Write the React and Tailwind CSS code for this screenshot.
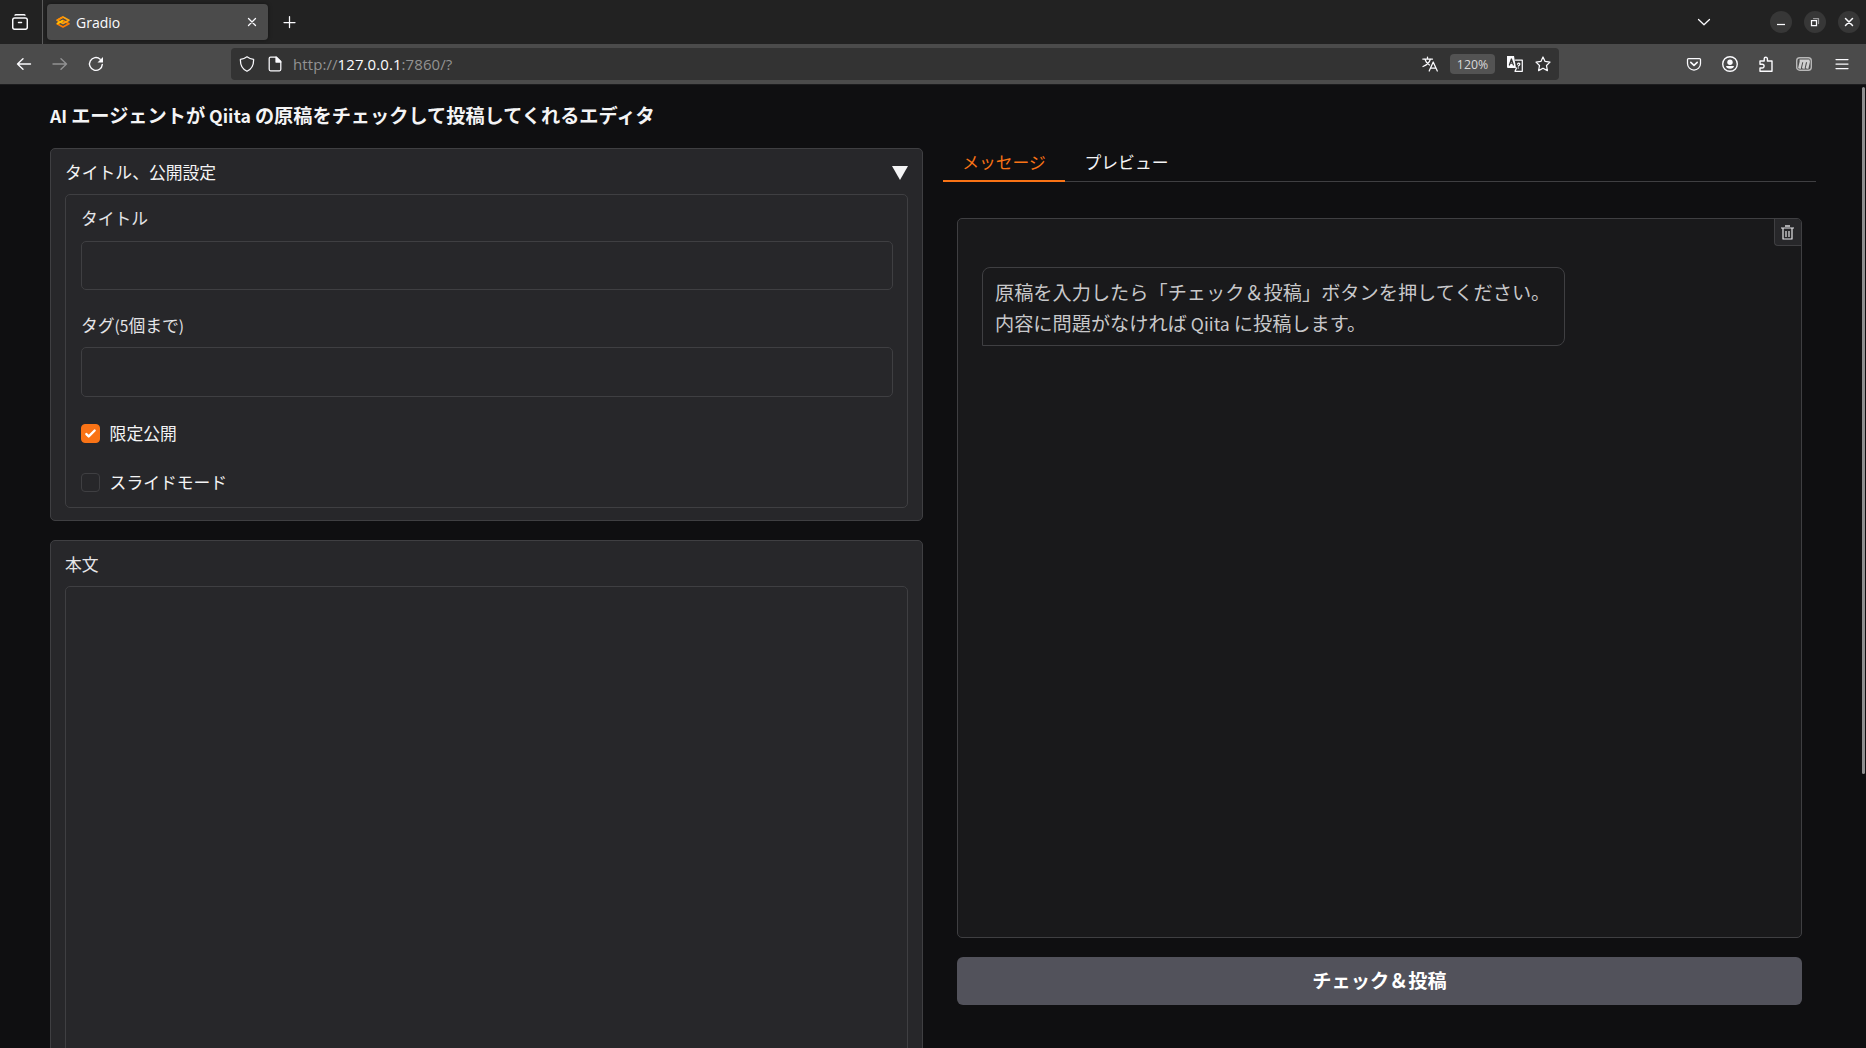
import React from 'react'

const ZOOM = '120%'

function Icon({ children, className = 'size-4', viewBox = '0 0 16 16' }) {
  return (
    <svg
      viewBox={viewBox}
      className={`shrink-0 ${className}`}
      fill="none"
      stroke="currentColor"
      strokeWidth="1.25"
      strokeLinecap="round"
      strokeLinejoin="round"
    >
      {children}
    </svg>
  )
}

// Latin runs sit a little smaller than the Japanese glyphs around them
function Latin({ children }) {
  return <span className="text-[0.92em]">{children}</span>
}

function GradioLogo() {
  return (
    <svg viewBox="0 0 14 12" className="h-3 w-3.5 shrink-0" fill="none" strokeWidth="1.7" strokeLinejoin="round">
      <path d="M7 4.6 12.9 7.8 7 11 1.1 7.8Z" stroke="#ff7c00" />
      <path d="M7 1 12.9 4.2 7 7.4 1.1 4.2Z" stroke="#ffa50f" />
      <path d="M1.1 7.8 7 4.6" stroke="#ffc400" />
      <path d="M1.1 4.2 7 1" stroke="#ff8a00" />
    </svg>
  )
}

function TabStrip() {
  return (
    <div className="flex h-11 shrink-0 items-center bg-[#222222] text-[#fbfbfe]">
      <div className="flex h-11 w-[43px] shrink-0 items-center border-r border-[#5b5b5b] pl-3">
        <Icon>
          <path d="M3 1.2 Q3.2 .7 4 .7H12 Q12.8 .7 13 1.2" strokeWidth="1.4" />
          <rect x=".7" y="4" width="14.6" height="11.3" rx="2" strokeWidth="1.5" />
          <path d="M6.5 8.6H9.5" strokeWidth="1.5" />
        </Icon>
      </div>
      <div className="ml-1 flex h-9 w-[221px] shrink-0 items-center rounded bg-[#4b4b4b] pr-[11px] pl-[9px] shadow-[0_0_4px_rgba(0,0,0,0.4)]">
        <GradioLogo />
        <span className="ml-1.5 flex-1 pt-0.5 text-[14px] leading-5">Gradio</span>
        <Icon className="size-2.5" viewBox="0 0 10 10">
          <path d="M1.5 1.5 8.5 8.5M8.5 1.5 1.5 8.5" />
        </Icon>
      </div>
      <Icon className="ml-3.5 size-3.5" viewBox="0 0 14 14">
        <path d="M7.5 1.5V12.5M2 7.5H13" />
      </Icon>
      <div className="flex-1" />
      <Icon className="mr-[59px] size-3.5" viewBox="0 0 14 14">
        <path d="M1.5 4.5 7 9.8 12.5 4.5" />
      </Icon>
      <div className="flex gap-3 pr-1.5">
        <WindowButton><path d="M7 13.5H15" strokeLinecap="butt" /></WindowButton>
        <WindowButton>
          <path d="M9.5 7.5H14.5V12.5" opacity=".5" />
          <path d="M7.5 9.5H12.5V14.5H7.5Z" strokeLinejoin="miter" />
        </WindowButton>
        <WindowButton><path d="M7.5 7.5 14.5 14.5M14.5 7.5 7.5 14.5" strokeWidth="1.5" /></WindowButton>
      </div>
    </div>
  )
}

function WindowButton({ children }) {
  return (
    <button className="size-[22px] rounded-full bg-[#373737]">
      <Icon className="size-[22px]" viewBox="0 0 22 22">{children}</Icon>
    </button>
  )
}

function Toolbar() {
  return (
    <div className="flex h-[41px] shrink-0 items-center border-b border-[#1c1c1e] bg-[#4b4b4b] text-[#fbfbfe]">
      <div className="flex w-[231px] items-center gap-5 pl-4">
        <Icon><path d="M14.5 8H1.5M7 2.8 1.5 8 7 13.2" strokeWidth="1.4" /></Icon>
        <Icon className="size-4 opacity-40"><path d="M1 8H14.5M9 2.8 14.5 8 9 13.2" strokeWidth="1.4" /></Icon>
        <Icon>
          <path d="M14.3 8.4A6.4 6.4 0 1 1 12.2 3.2" strokeWidth="1.4" />
          <path d="M15 1V6.5H9.5Z" fill="currentColor" stroke="none" />
        </Icon>
      </div>
      <div className="flex h-8 w-[1328px] items-center rounded bg-[#333333] pr-2 pl-2">
        <Icon>
          <path d="M8 .8C10 2.4 12 3.1 14.6 3.3 14.8 9 12.8 13.2 8 15.3 3.2 13.2 1.2 9 1.4 3.3 4 3.1 6 2.4 8 .8Z" />
        </Icon>
        <Icon className="ml-3 size-4">
          <path d="M3.5 1.2H9.5L13.8 5.5V13.3Q13.8 14.8 12.5 14.8H3.5Q2.2 14.8 2.2 13.3V2.5Q2.2 1.2 3.5 1.2Z" />
          <path d="M9 1.2V6H13.8Z" fill="currentColor" />
        </Icon>
        <span className="ml-2.5 flex-1 pt-px text-[15px] tracking-[0.08px] text-[#929292]">
          http://<span className="text-[#fbfbfe]">127.0.0.1</span>:7860/?
        </span>
        <Icon>
          <path d="M.8 3H10.5M5.5 1V3M8.5 3Q7 8 1 10.5M2.8 3Q4 7 7.5 9" />
          <path d="M7.2 15 11.2 6 15.3 15M8.7 12H13.8" />
        </Icon>
        <span className="mx-3 flex h-5 w-[45px] items-center justify-center rounded-sm bg-[#535353] pt-0.5 text-[12.3px] text-[#d8d8d8]">
          {ZOOM}
        </span>
        <Icon>
          <path d="M0 0H7L9 12H1Q0 12 0 11Z" fill="currentColor" stroke="none" />
          <path d="M2.4 9 4.4 3 6.4 9M3 7H5.8" stroke="#333333" />
          <path d="M8.5 4H15.3V15.3H8L9.5 12" />
          <path d="M10.5 8.2Q11 7 12.2 7.2 13.5 7.8 12.2 9.2L11.3 10M11.2 11.8V12" />
        </Icon>
        <Icon className="ml-3 size-4">
          <path d="M8 1 10.1 5.4 15 6.1 11.5 9.5 12.4 14.6 8 12.2 3.6 14.6 4.5 9.5 1 6.1 5.9 5.4Z" />
        </Icon>
      </div>
      <div className="flex flex-1 items-center justify-end gap-[22px] pr-4">
        <div className="flex gap-5">
          <Icon>
            <path d="M2.5 2.5H13.5Q14.5 2.5 14.5 3.5V7.5A6.5 6.5 0 0 1 1.5 7.5V3.5Q1.5 2.5 2.5 2.5Z" />
            <path d="M4.8 6.3 8 9.3 11.2 6.3" strokeWidth="1.6" />
          </Icon>
          <Icon>
            <circle cx="8" cy="8" r="7.3" strokeWidth="1.4" />
            <circle cx="8" cy="6.2" r="2.7" fill="currentColor" stroke="none" />
            <path d="M4 10H12Q11.5 12.8 8 12.8 4.5 12.8 4 10Z" fill="currentColor" stroke="none" />
          </Icon>
          <Icon>
            <path d="M2 6.8V5H6.2V2.8A1.6 1.6 0 0 1 9.4 2.8V5H14V15.2H2V12H4.2A1.9 1.9 0 0 0 4.2 8.2H2Z" strokeWidth="1.4" />
          </Icon>
        </div>
        <Icon>
          <rect x=".7" y="1.8" width="14.6" height="12.4" rx="3" stroke="#b8b8b8" strokeWidth="1.4" />
          <path
            d="M3.4 12.6 5.2 4.8M7.2 12.6 8.9 5M11 12.6 12.8 5M3.6 4.8H13.6"
            stroke="#cfcfcf"
            strokeWidth="2.7"
            strokeLinecap="butt"
          />
        </Icon>
        <Icon><path d="M2 3.5H14M2 8H14M2 12.5H14" /></Icon>
      </div>
    </div>
  )
}

function Checkbox({ label, checked }) {
  return (
    <div className="flex h-[25px] items-center gap-[9.6px] text-[#f4f4f5]">
      <span
        className={`flex size-[19px] shrink-0 items-center justify-center rounded border ${
          checked ? 'border-[#f97316] bg-[#f97316]' : 'border-[#3f3f42]'
        }`}
      >
        {checked && (
          <svg viewBox="0 0 16 16" className="size-[19px] shrink-0" fill="white">
            <path d="M12.207 4.793a1 1 0 0 1 0 1.414l-5 5a1 1 0 0 1-1.414 0l-2-2a1 1 0 0 1 1.414-1.414L6.5 9.086l4.293-4.293a1 1 0 0 1 1.414 0z" />
          </svg>
        )}
      </span>
      {label}
    </div>
  )
}

function SettingsPanel() {
  return (
    <section className="h-[373px] shrink-0 rounded-[5px] border border-[#3f3f42] bg-[#27272a] px-3.5 text-[#f4f4f5]">
      <div className="flex h-[45px] items-center justify-between pt-[3px] pr-[0.5px]">
        <span>タイトル、公開設定</span>
        <svg viewBox="0 0 16 14" className="h-3.5 w-4" fill="#f4f4f5">
          <path d="M0 0H16L8 14Z" />
        </svg>
      </div>
      <div className="h-[314px] rounded-[5px] border border-[#3f3f42] pt-[11px] pr-3.5 pl-[15px]">
        <label className="block text-[#e4e4e7]">
          <span className="block h-[25px] leading-[25px]">タイトル</span>
          <input className="mt-2.5 block h-[49px] w-full rounded-[5px] border border-[#3f3f42] bg-[#27272a] px-3 outline-none" />
        </label>
        <label className="mt-[23px] block text-[#e4e4e7]">
          <span className="block h-[25px] leading-[25px]">
            タグ<Latin>(5</Latin>個まで<Latin>)</Latin>
          </span>
          <input className="mt-[9px] block h-[50px] w-full rounded-[5px] border border-[#3f3f42] bg-[#27272a] px-3 outline-none" />
        </label>
        <div className="mt-6 flex flex-col gap-6">
          <Checkbox label="限定公開" checked />
          <Checkbox label="スライドモード" />
        </div>
      </div>
    </section>
  )
}

function BodyPanel() {
  return (
    <section className="mt-[19px] h-[600px] shrink-0 rounded-[5px] border border-[#3f3f42] bg-[#27272a] px-3.5 text-[#e4e4e7]">
      <div className="flex h-[45px] items-center pt-[3px]">本文</div>
      <textarea className="block h-[540px] w-full resize-none rounded-[5px] border border-[#3f3f42] bg-[#27272a] outline-none" />
    </section>
  )
}

function MessagePane() {
  return (
    <div className="flex w-[873px] flex-col">
      <div className="flex h-[34px] border-b border-[#3f3f42]">
        <button className="h-[34px] w-[122px] border-b-2 border-[#f97316] pb-0.5 text-[#f97316]">メッセージ</button>
        <button className="h-[34px] w-[122px] pb-1 pl-px text-[#f4f4f5]">プレビュー</button>
      </div>
      <div className="mx-3.5 mt-9 flex flex-col">
        <div className="relative h-[720px] rounded-[5px] border border-[#3f3f42] bg-[#19191b] px-6 pt-12">
          <button className="absolute top-0 right-0 flex h-[27px] w-[27px] items-center justify-center rounded-tr rounded-bl border-b border-l border-[#3f3f42] bg-[#27272a] pr-px text-[#e4e4e7]">
            <Icon className="h-[17px] w-[15px]" viewBox="0 0 15 17">
              <g strokeLinecap="butt" strokeWidth="1">
                <path d="M5 2H10" strokeWidth="1.4" />
                <path d="M1 4H14M3 4V15H12V4M6 7V13M9 7V13" strokeWidth="1.2" />
              </g>
            </Icon>
          </button>
          <div className="h-[79px] w-[583px] rounded-lg rounded-bl-none border border-[#3f3f42] px-3 pt-[9px] text-[19.2px] leading-[31px] text-[#c8c8ca]">
            <p>原稿を入力したら「チェック＆投稿」ボタンを押してください。</p>
            <p>
              内容に問題がなければ<Latin> Qiita </Latin>に投稿します。
            </p>
          </div>
        </div>
        <button className="mt-[19px] h-12 rounded-md bg-[#52525b] pb-0.5 text-[19.2px] font-bold text-white">
          チェック＆投稿
        </button>
      </div>
    </div>
  )
}

export default function App() {
  return (
    <div className="flex h-[1048px] w-[1866px] flex-col overflow-hidden bg-[#0f0f11] font-['Open_Sans','Noto_Sans_CJK_JP',sans-serif]">
      <TabStrip />
      <Toolbar />
      <div className="flex min-h-0 flex-1 justify-between font-['Noto_Sans_CJK_JP',sans-serif] text-[16.8px]">
        <main className="ml-[50px] w-[1766px]">
          <h1 className="h-[63px] pt-[15px] text-[19.2px] leading-[31px] font-bold text-[#f4f4f5]">
            <Latin>AI </Latin>エージェントが<Latin> Qiita </Latin>の原稿をチェックして投稿してくれるエディタ
          </h1>
          <div className="flex items-start gap-5">
            <div className="flex w-[873px] flex-col">
              <SettingsPanel />
              <BodyPanel />
            </div>
            <MessagePane />
          </div>
        </main>
        <div className="mt-0.5 mr-px h-[687px] w-[3px] rounded-full bg-[#8f8f90]" />
      </div>
    </div>
  )
}
